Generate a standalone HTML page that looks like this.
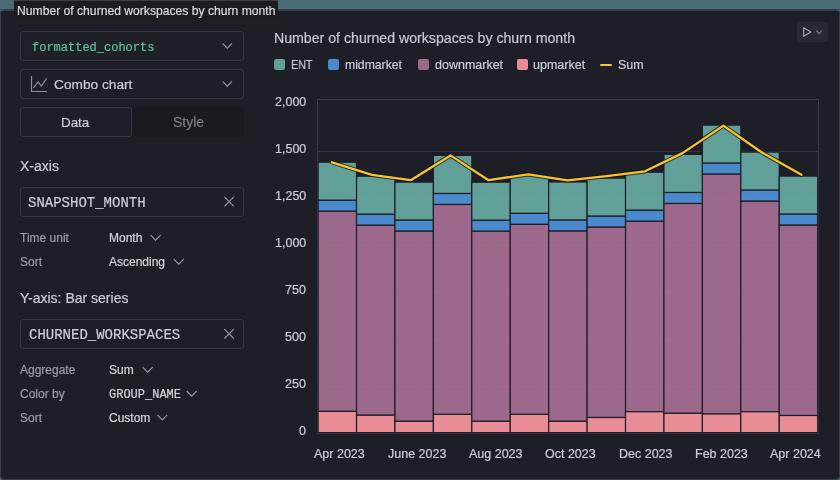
<!DOCTYPE html>
<html><head><meta charset="utf-8"><style>
html,body{margin:0;padding:0;width:840px;height:480px;overflow:hidden;background:#4c6a73;}
.t{position:absolute;font-family:"Liberation Sans",sans-serif;line-height:1;white-space:pre;will-change:transform;-webkit-text-stroke-width:0.2px;}
.m{font-family:"Liberation Mono",monospace;}
.box{position:absolute;border:1px solid #363549;border-radius:3px;}
.ic{position:absolute;overflow:visible;}
</style></head><body>
<div style="position:absolute;left:0;top:0;width:840px;height:10px;background:#4c6a73"></div>
<div style="position:absolute;left:0;top:9px;width:838px;height:468px;background:#1e1e26;border:1px solid #3a3b4b;border-top:2px solid #3b3d4e;border-radius:4px"></div>
<div style="position:absolute;left:14px;top:0;width:264px;height:19px;background:#1c1c23;border-top:1px solid #3e3c4c"></div>
<div class="t" style="left:16.50px;top:4.82px;font-size:12.15px;color:#dcdae2;">Number of churned workspaces by churn month</div>
<div class="box" style="left:20px;top:31px;width:222px;height:28px"></div>
<div style="position:absolute;left:24px;top:36px;width:137px;height:20px;background:#202028;border-radius:2px"></div>
<div class="t m" style="left:31.50px;top:41.50px;font-size:12px;color:#5cc59a;">formatted_cohorts</div>
<svg class="ic" style="left:220px;top:41px" width="13.4" height="8.9"><path d="M2.60 2.30 L7.30 7.20 L12.00 2.30" fill="none" stroke="#9b9aa6" stroke-width="1.1"/></svg>
<div class="box" style="left:20px;top:69px;width:222px;height:28px"></div>
<svg class="ic" style="left:30px;top:75px" width="20" height="20"><path d="M1.5 1 V16.5 H17" fill="none" stroke="#8f8e9a" stroke-width="1.2"/><path d="M3.5 12.9 L8.1 7.0 L11.3 11.0 L16.6 3.4" fill="none" stroke="#8f8e9a" stroke-width="1.2"/></svg>
<div class="t" style="left:54.00px;top:77.60px;font-size:13.7px;color:#cfcdd6;">Combo chart</div>
<svg class="ic" style="left:220px;top:79px" width="13.4" height="8.9"><path d="M2.60 2.30 L7.30 7.20 L12.00 2.30" fill="none" stroke="#9b9aa6" stroke-width="1.1"/></svg>
<div style="position:absolute;left:132px;top:107px;width:112px;height:30px;background:#1a1a20;border-radius:0 3px 3px 0"></div>
<div class="box" style="left:20px;top:107px;width:110px;height:28px"></div>
<div class="t" style="left:60.80px;top:115.56px;font-size:13.4px;color:#cfcdd6;">Data</div>
<div class="t" style="left:172.50px;top:115.05px;font-size:14px;color:#7d7c88;">Style</div>
<div class="t" style="left:20.00px;top:159.25px;font-size:14px;color:#cfcdd6;">X-axis</div>
<div class="box" style="left:20px;top:187px;width:222px;height:28px"></div>
<div class="t m" style="left:28.40px;top:196.17px;font-size:14px;color:#cfcdd6;">SNAPSHOT_MONTH</div>
<svg class="ic" style="left:222px;top:194px" width="13.4" height="13.4"><path d="M2.40 2.90 L11.80 12.30 M11.80 2.90 L2.40 12.30" fill="none" stroke="#9b9aa6" stroke-width="1.1"/></svg>
<div class="t" style="left:20.40px;top:231.94px;font-size:12px;color:#9d9ca8;">Time unit</div>
<div class="t" style="left:109.20px;top:231.94px;font-size:12px;color:#d6d5dd;">Month</div>
<svg class="ic" style="left:148px;top:233px" width="14" height="9.1"><path d="M2.60 2.10 L7.60 7.20 L12.60 2.10" fill="none" stroke="#9b9aa6" stroke-width="1.1"/></svg>
<div class="t" style="left:20.40px;top:255.94px;font-size:12px;color:#9d9ca8;">Sort</div>
<div class="t" style="left:109.20px;top:255.94px;font-size:12px;color:#d6d5dd;">Ascending</div>
<svg class="ic" style="left:171px;top:257px" width="14" height="9.1"><path d="M2.80 2.10 L7.80 7.20 L12.80 2.10" fill="none" stroke="#9b9aa6" stroke-width="1.1"/></svg>
<div class="t" style="left:20.00px;top:290.85px;font-size:14px;color:#cfcdd6;">Y-axis: Bar series</div>
<div class="box" style="left:20px;top:319px;width:222px;height:28px"></div>
<div class="t m" style="left:28.70px;top:327.97px;font-size:14px;color:#cfcdd6;">CHURNED_WORKSPACES</div>
<svg class="ic" style="left:222px;top:327px" width="13.4" height="13.4"><path d="M2.40 2.10 L11.80 11.50 M11.80 2.10 L2.40 11.50" fill="none" stroke="#9b9aa6" stroke-width="1.1"/></svg>
<div class="t" style="left:20.20px;top:363.84px;font-size:12px;color:#9d9ca8;">Aggregate</div>
<div class="t" style="left:109.00px;top:363.84px;font-size:12px;color:#d6d5dd;">Sum</div>
<svg class="ic" style="left:140px;top:365px" width="14" height="9.1"><path d="M2.70 2.10 L7.70 7.20 L12.70 2.10" fill="none" stroke="#9b9aa6" stroke-width="1.1"/></svg>
<div class="t" style="left:20.20px;top:387.74px;font-size:12px;color:#9d9ca8;">Color by</div>
<div class="t m" style="left:109.00px;top:388.70px;font-size:12px;color:#d6d5dd;">GROUP_NAME</div>
<svg class="ic" style="left:184px;top:389px" width="14" height="9.1"><path d="M2.70 2.00 L7.70 7.10 L12.70 2.00" fill="none" stroke="#9b9aa6" stroke-width="1.1"/></svg>
<div class="t" style="left:20.20px;top:411.54px;font-size:12px;color:#9d9ca8;">Sort</div>
<div class="t" style="left:109.00px;top:411.54px;font-size:12px;color:#d6d5dd;">Custom</div>
<svg class="ic" style="left:155px;top:412px" width="14" height="9.1"><path d="M2.30 2.80 L7.30 7.90 L12.30 2.80" fill="none" stroke="#9b9aa6" stroke-width="1.1"/></svg>
<div class="t" style="left:273.60px;top:31.42px;font-size:14.15px;color:#c9c7d0;">Number of churned workspaces by churn month</div>
<div style="position:absolute;left:274px;top:59px;width:11px;height:11px;border-radius:2px;background:#61a098"></div>
<div class="t" style="left:291.20px;top:58.92px;font-size:12.5px;color:#cfcdd6;transform:scaleX(0.86);transform-origin:0 0;">ENT</div>
<div style="position:absolute;left:328px;top:59px;width:11px;height:11px;border-radius:2px;background:#4a89cb"></div>
<div class="t" style="left:344.90px;top:59.17px;font-size:12.2px;color:#cfcdd6;">midmarket</div>
<div style="position:absolute;left:418px;top:59px;width:11px;height:11px;border-radius:2px;background:#9c688c"></div>
<div class="t" style="left:434.50px;top:58.92px;font-size:12.5px;color:#cfcdd6;">downmarket</div>
<div style="position:absolute;left:517px;top:59px;width:11px;height:11px;border-radius:2px;background:#e88c96"></div>
<div class="t" style="left:533.20px;top:58.92px;font-size:12.5px;color:#cfcdd6;">upmarket</div>
<div style="position:absolute;left:600px;top:63.5px;width:12px;height:2px;border-radius:1px;background:#f7c52a"></div>
<div class="t" style="left:618.00px;top:58.92px;font-size:12.5px;color:#cfcdd6;">Sum</div>
<div style="position:absolute;left:797px;top:22px;width:31px;height:20px;border-radius:3px;background:#2a2932"></div>
<svg class="ic" style="left:800px;top:24px" width="26" height="16"><path d="M3.6 3.7 L10.8 8 L3.6 12.3 Z" fill="none" stroke="#a9a8b3" stroke-width="1.1" stroke-linejoin="round"/><path d="M16.2 6.3 L19.1 9.6 L22 6.3" fill="none" stroke="#7f7e8a" stroke-width="1.1"/></svg>
<svg style="position:absolute;left:0;top:0" width="840" height="480"><rect x="317.5" y="99.5" width="501" height="334" fill="none" stroke="#3b3a4b" stroke-width="1"/><line x1="317" y1="151.5" x2="819" y2="151.5" stroke="#34333f" stroke-width="1"/><rect x="318.10" y="162.20" width="38.43" height="38.10" fill="#61a098" stroke="#1e1e26" stroke-width="1.2"/><rect x="318.10" y="200.30" width="38.43" height="11.00" fill="#4a89cb" stroke="#1e1e26" stroke-width="1.2"/><rect x="318.10" y="211.30" width="38.43" height="200.10" fill="#9c688c" stroke="#1e1e26" stroke-width="1.2"/><rect x="318.10" y="411.40" width="38.43" height="21.20" fill="#e88c96" stroke="#1e1e26" stroke-width="1.2"/><rect x="356.53" y="176.20" width="38.43" height="38.10" fill="#61a098" stroke="#1e1e26" stroke-width="1.2"/><rect x="356.53" y="214.30" width="38.43" height="11.00" fill="#4a89cb" stroke="#1e1e26" stroke-width="1.2"/><rect x="356.53" y="225.30" width="38.43" height="189.90" fill="#9c688c" stroke="#1e1e26" stroke-width="1.2"/><rect x="356.53" y="415.20" width="38.43" height="17.40" fill="#e88c96" stroke="#1e1e26" stroke-width="1.2"/><rect x="394.96" y="182.10" width="38.43" height="38.10" fill="#61a098" stroke="#1e1e26" stroke-width="1.2"/><rect x="394.96" y="220.20" width="38.43" height="11.00" fill="#4a89cb" stroke="#1e1e26" stroke-width="1.2"/><rect x="394.96" y="231.20" width="38.43" height="190.10" fill="#9c688c" stroke="#1e1e26" stroke-width="1.2"/><rect x="394.96" y="421.30" width="38.43" height="11.30" fill="#e88c96" stroke="#1e1e26" stroke-width="1.2"/><rect x="433.39" y="155.40" width="38.43" height="38.10" fill="#61a098" stroke="#1e1e26" stroke-width="1.2"/><rect x="433.39" y="193.50" width="38.43" height="11.00" fill="#4a89cb" stroke="#1e1e26" stroke-width="1.2"/><rect x="433.39" y="204.50" width="38.43" height="209.90" fill="#9c688c" stroke="#1e1e26" stroke-width="1.2"/><rect x="433.39" y="414.40" width="38.43" height="18.20" fill="#e88c96" stroke="#1e1e26" stroke-width="1.2"/><rect x="471.82" y="182.20" width="38.43" height="38.10" fill="#61a098" stroke="#1e1e26" stroke-width="1.2"/><rect x="471.82" y="220.30" width="38.43" height="11.00" fill="#4a89cb" stroke="#1e1e26" stroke-width="1.2"/><rect x="471.82" y="231.30" width="38.43" height="190.00" fill="#9c688c" stroke="#1e1e26" stroke-width="1.2"/><rect x="471.82" y="421.30" width="38.43" height="11.30" fill="#e88c96" stroke="#1e1e26" stroke-width="1.2"/><rect x="510.25" y="175.30" width="38.43" height="38.10" fill="#61a098" stroke="#1e1e26" stroke-width="1.2"/><rect x="510.25" y="213.40" width="38.43" height="11.00" fill="#4a89cb" stroke="#1e1e26" stroke-width="1.2"/><rect x="510.25" y="224.40" width="38.43" height="190.00" fill="#9c688c" stroke="#1e1e26" stroke-width="1.2"/><rect x="510.25" y="414.40" width="38.43" height="18.20" fill="#e88c96" stroke="#1e1e26" stroke-width="1.2"/><rect x="548.68" y="182.00" width="38.43" height="38.10" fill="#61a098" stroke="#1e1e26" stroke-width="1.2"/><rect x="548.68" y="220.10" width="38.43" height="11.00" fill="#4a89cb" stroke="#1e1e26" stroke-width="1.2"/><rect x="548.68" y="231.10" width="38.43" height="190.20" fill="#9c688c" stroke="#1e1e26" stroke-width="1.2"/><rect x="548.68" y="421.30" width="38.43" height="11.30" fill="#e88c96" stroke="#1e1e26" stroke-width="1.2"/><rect x="587.11" y="178.10" width="38.43" height="38.10" fill="#61a098" stroke="#1e1e26" stroke-width="1.2"/><rect x="587.11" y="216.20" width="38.43" height="11.00" fill="#4a89cb" stroke="#1e1e26" stroke-width="1.2"/><rect x="587.11" y="227.20" width="38.43" height="190.30" fill="#9c688c" stroke="#1e1e26" stroke-width="1.2"/><rect x="587.11" y="417.50" width="38.43" height="15.10" fill="#e88c96" stroke="#1e1e26" stroke-width="1.2"/><rect x="625.54" y="172.20" width="38.43" height="38.10" fill="#61a098" stroke="#1e1e26" stroke-width="1.2"/><rect x="625.54" y="210.30" width="38.43" height="11.00" fill="#4a89cb" stroke="#1e1e26" stroke-width="1.2"/><rect x="625.54" y="221.30" width="38.43" height="190.40" fill="#9c688c" stroke="#1e1e26" stroke-width="1.2"/><rect x="625.54" y="411.70" width="38.43" height="20.90" fill="#e88c96" stroke="#1e1e26" stroke-width="1.2"/><rect x="663.97" y="154.40" width="38.43" height="38.10" fill="#61a098" stroke="#1e1e26" stroke-width="1.2"/><rect x="663.97" y="192.50" width="38.43" height="11.00" fill="#4a89cb" stroke="#1e1e26" stroke-width="1.2"/><rect x="663.97" y="203.50" width="38.43" height="209.80" fill="#9c688c" stroke="#1e1e26" stroke-width="1.2"/><rect x="663.97" y="413.30" width="38.43" height="19.30" fill="#e88c96" stroke="#1e1e26" stroke-width="1.2"/><rect x="702.40" y="125.10" width="38.43" height="38.10" fill="#61a098" stroke="#1e1e26" stroke-width="1.2"/><rect x="702.40" y="163.20" width="38.43" height="11.00" fill="#4a89cb" stroke="#1e1e26" stroke-width="1.2"/><rect x="702.40" y="174.20" width="38.43" height="239.80" fill="#9c688c" stroke="#1e1e26" stroke-width="1.2"/><rect x="702.40" y="414.00" width="38.43" height="18.60" fill="#e88c96" stroke="#1e1e26" stroke-width="1.2"/><rect x="740.83" y="152.10" width="38.43" height="38.10" fill="#61a098" stroke="#1e1e26" stroke-width="1.2"/><rect x="740.83" y="190.20" width="38.43" height="11.00" fill="#4a89cb" stroke="#1e1e26" stroke-width="1.2"/><rect x="740.83" y="201.20" width="38.43" height="210.50" fill="#9c688c" stroke="#1e1e26" stroke-width="1.2"/><rect x="740.83" y="411.70" width="38.43" height="20.90" fill="#e88c96" stroke="#1e1e26" stroke-width="1.2"/><rect x="779.26" y="176.10" width="38.43" height="38.10" fill="#61a098" stroke="#1e1e26" stroke-width="1.2"/><rect x="779.26" y="214.20" width="38.43" height="11.00" fill="#4a89cb" stroke="#1e1e26" stroke-width="1.2"/><rect x="779.26" y="225.20" width="38.43" height="190.30" fill="#9c688c" stroke="#1e1e26" stroke-width="1.2"/><rect x="779.26" y="415.50" width="38.43" height="17.10" fill="#e88c96" stroke="#1e1e26" stroke-width="1.2"/><line x1="319" y1="198.5" x2="818" y2="198.5" stroke="#ffffff" stroke-opacity="0.06" stroke-width="1" stroke-dasharray="1 2"/><line x1="319" y1="245.5" x2="818" y2="245.5" stroke="#ffffff" stroke-opacity="0.06" stroke-width="1" stroke-dasharray="1 2"/><line x1="319" y1="292.5" x2="818" y2="292.5" stroke="#ffffff" stroke-opacity="0.06" stroke-width="1" stroke-dasharray="1 2"/><line x1="319" y1="339.5" x2="818" y2="339.5" stroke="#ffffff" stroke-opacity="0.06" stroke-width="1" stroke-dasharray="1 2"/><line x1="319" y1="386.5" x2="818" y2="386.5" stroke="#ffffff" stroke-opacity="0.06" stroke-width="1" stroke-dasharray="1 2"/><polyline points="331.80,162.30 372.00,174.90 410.70,180.20 450.50,155.40 488.60,180.20 528.10,174.30 567.60,180.40 606.70,176.20 645.00,171.30 682.50,153.10 723.40,125.60 761.50,152.20 801.50,174.80" fill="none" stroke="#15151b" stroke-opacity="0.8" stroke-width="4.2" stroke-linejoin="round" stroke-linecap="round"/><polyline points="331.80,162.30 372.00,174.90 410.70,180.20 450.50,155.40 488.60,180.20 528.10,174.30 567.60,180.40 606.70,176.20 645.00,171.30 682.50,153.10 723.40,125.60 761.50,152.20 801.50,174.80" fill="none" stroke="#f7c52a" stroke-width="2.3" stroke-linejoin="round" stroke-linecap="round"/></svg>
<div class="t" style="right:534px;top:95.67px;font-size:12.5px;color:#cfcdd6;text-align:right">2,000</div>
<div class="t" style="right:534px;top:142.70px;font-size:12.5px;color:#cfcdd6;text-align:right">1,500</div>
<div class="t" style="right:534px;top:189.73px;font-size:12.5px;color:#cfcdd6;text-align:right">1,250</div>
<div class="t" style="right:534px;top:236.76px;font-size:12.5px;color:#cfcdd6;text-align:right">1,000</div>
<div class="t" style="right:534px;top:283.79px;font-size:12.5px;color:#cfcdd6;text-align:right">750</div>
<div class="t" style="right:534px;top:330.82px;font-size:12.5px;color:#cfcdd6;text-align:right">500</div>
<div class="t" style="right:534px;top:377.85px;font-size:12.5px;color:#cfcdd6;text-align:right">250</div>
<div class="t" style="right:534px;top:424.88px;font-size:12.5px;color:#cfcdd6;text-align:right">0</div>
<div class="t" style="left:314.30px;top:447.82px;font-size:12.5px;color:#cfcdd6;">Apr 2023</div>
<div class="t" style="left:388.00px;top:447.82px;font-size:12.5px;color:#cfcdd6;">June 2023</div>
<div class="t" style="left:469.10px;top:447.82px;font-size:12.5px;color:#cfcdd6;">Aug 2023</div>
<div class="t" style="left:545.00px;top:447.82px;font-size:12.5px;color:#cfcdd6;">Oct 2023</div>
<div class="t" style="left:619.30px;top:447.82px;font-size:12.5px;color:#cfcdd6;">Dec 2023</div>
<div class="t" style="left:695.00px;top:447.82px;font-size:12.5px;color:#cfcdd6;">Feb 2023</div>
<div class="t" style="left:770.00px;top:447.82px;font-size:12.5px;color:#cfcdd6;">Apr 2024</div>
</body></html>
